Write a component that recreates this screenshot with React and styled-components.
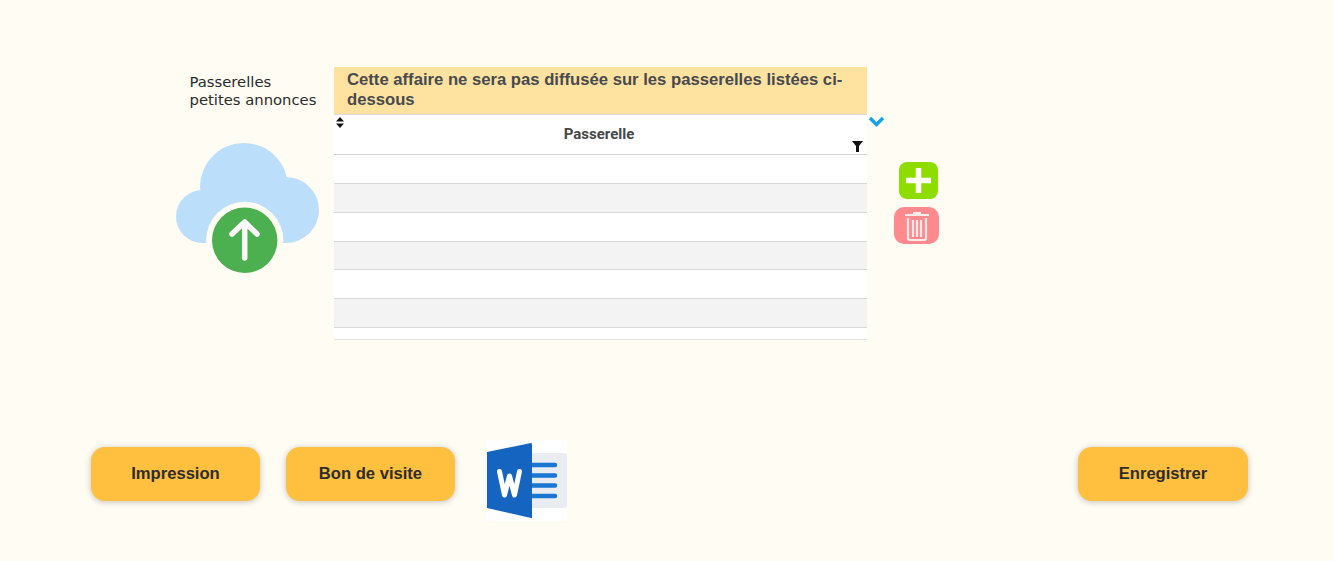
import React from "react";
import styled, { createGlobalStyle } from "styled-components";

const GlobalStyle = createGlobalStyle`
  html, body {
    margin: 0;
    padding: 0;
    background-color: #fffcf4;
    overflow: hidden;
  }
`;

const Page = styled.div`
  display: flex;
  flex-direction: column;
  width: 1334px;
  height: 561px;
  padding-top: 67px;
  box-sizing: border-box;
`;

const TopSection = styled.div`
  display: flex;
  align-items: flex-start;
  height: 373px;
  padding-left: 176px;
`;

const SideColumn = styled.div`
  display: flex;
  flex-direction: column;
  width: 158px;
`;

const SideLabel = styled.div`
  margin-left: 13.5px;
  margin-top: 6px;
  font-family: "DejaVu Sans", sans-serif;
  font-size: 14.8px;
  line-height: 18px;
  color: #2b2b2b;
`;

const CloudIcon = styled.svg`
  display: block;
  width: 143px;
  height: 136px;
  margin-top: 34px;
`;

const TableBox = styled.div`
  display: flex;
  flex-direction: column;
  width: 533px;
`;

const Banner = styled.div`
  box-sizing: border-box;
  height: 48px;
  padding: 3px 13px 0;
  background-color: #fee29f;
  border-bottom: 1px solid #d9d9d9;
  font-family: "Liberation Sans", sans-serif;
  font-size: 16.67px;
  font-weight: bold;
  line-height: 20px;
  color: #474a4f;
`;

const HeaderRow = styled.div`
  position: relative;
  display: flex;
  align-items: center;
  justify-content: center;
  box-sizing: border-box;
  height: 40px;
  padding: 0 3px 1px 0;
  background-color: #ffffff;
  border-bottom: 1px solid #d4d4d4;
  font-family: Roboto, sans-serif;
  font-size: 15px;
  font-weight: bold;
  color: #484848;
`;

const SortIcon = styled.svg`
  position: absolute;
  left: 2px;
  top: 2px;
  width: 8px;
  height: 11px;
`;

const FilterIcon = styled.svg`
  position: absolute;
  right: 4px;
  bottom: 2px;
  width: 11px;
  height: 12px;
`;

const Row = styled.div`
  box-sizing: border-box;
  height: ${(p) => p.$height}px;
  background-color: ${(p) => (p.$odd ? "#f3f3f3" : "#ffffff")};
  border-bottom: 1px solid ${(p) => (p.$last ? "#e2e2e2" : "#d8d8d8")};
`;

const ActionColumn = styled.div`
  display: flex;
  flex-direction: column;
  width: 72px;
  padding-top: 49px;
`;

const Chevron = styled.svg`
  display: block;
  width: 17px;
  height: 11px;
  margin-left: 1px;
`;

const AddButton = styled.div`
  display: flex;
  align-items: center;
  justify-content: center;
  width: 39px;
  height: 37px;
  margin: 35px 0 0 32px;
  border-radius: 8px;
  background-color: #8fdc00;
`;

const DeleteButton = styled.div`
  display: flex;
  align-items: center;
  justify-content: center;
  width: 45px;
  height: 37px;
  margin: 8px 0 0 27px;
  border-radius: 10px;
  background-color: #ff8a8e;
`;

const Footer = styled.div`
  display: flex;
  align-items: flex-start;
  height: 81px;
  padding: 0 86px 0 90.7px;
`;

const OrangeButton = styled.button`
  width: ${(p) => (p.$right ? "170px" : "169.6px")};
  height: 54px;
  margin-top: 7px;
  margin-right: ${(p) => p.$gap || 0}px;
  margin-left: ${(p) => (p.$right ? "auto" : "0")};
  padding: 0 0 1px;
  border: none;
  border-radius: 14px;
  background-color: #ffbf3f;
  box-shadow: 0 1px 6px rgba(0, 0, 0, 0.24);
  font-family: "Liberation Sans", sans-serif;
  font-size: 16.6px;
  font-weight: bold;
  color: #2d2d2d;
`;

const WordLogo = styled.svg`
  display: block;
  width: 80px;
  height: 81px;
  margin-left: 6px;
`;

const rows = [
  { height: 29 },
  { height: 29, odd: true },
  { height: 29 },
  { height: 28, odd: true },
  { height: 29 },
  { height: 29, odd: true },
  { height: 12, last: true },
];

const App = () => {
  return (
    <Page>
      <GlobalStyle />
      <TopSection>
        <SideColumn>
          <SideLabel>
            Passerelles
            <br />
            petites annonces
          </SideLabel>
          <CloudIcon viewBox="0 0 143 136">
            <circle cx="68" cy="44" r="44" fill="#bbdefb" />
            <circle cx="110" cy="67" r="33" fill="#bbdefb" />
            <circle cx="26.5" cy="73.5" r="26.5" fill="#bbdefb" />
            <rect x="26" y="44" width="84" height="56" fill="#bbdefb" />
            <circle cx="68.7" cy="97.3" r="38.6" fill="#fffcf4" />
            <circle cx="68.7" cy="97.3" r="32.7" fill="#4caf50" />
            <path
              d="M68.7 115 V80 M56 91 L68.7 79 L81 91"
              fill="none"
              stroke="#fafafa"
              strokeWidth="5.5"
              strokeLinecap="round"
              strokeLinejoin="round"
            />
          </CloudIcon>
        </SideColumn>
        <TableBox>
          <Banner>Cette affaire ne sera pas diffusée sur les passerelles listées ci-dessous</Banner>
          <HeaderRow>
            <SortIcon viewBox="0 0 8 11">
              <path d="M4 0 L8 4.5 H0 Z M4 11 L0 6.5 H8 Z" fill="#111111" />
            </SortIcon>
            Passerelle
            <FilterIcon viewBox="0 0 11 12">
              <path d="M0 1 H11 L7 6 V12 H4 V6 Z" fill="#111111" />
            </FilterIcon>
          </HeaderRow>
          {rows.map((r, i) => (
            <Row key={i} $height={r.height} $odd={r.odd} $last={r.last} />
          ))}
        </TableBox>
        <ActionColumn>
          <Chevron viewBox="0 0 17 11">
            <path d="M2 2 L8.5 8.5 L15 2" fill="none" stroke="#14a3e8" strokeWidth="3.4" />
          </Chevron>
          <AddButton>
            <svg width="27" height="27" viewBox="0 0 27 27">
              <path d="M13.5 1 V26 M1 13.5 H26" stroke="#ffffff" strokeWidth="5.5" fill="none" />
            </svg>
          </AddButton>
          <DeleteButton>
            <svg width="24" height="30" viewBox="0 0 24 30" fill="none" stroke="#ffeaea" strokeWidth="2.2">
              <path d="M0 4 H24 M8 2 H16" />
              <path d="M3 7 V27 Q3 29 5 29 H19 Q21 29 21 27 V7" />
              <path d="M8 9 V26 M12 9 V26 M16 9 V26" />
            </svg>
          </DeleteButton>
        </ActionColumn>
      </TopSection>
      <Footer>
        <OrangeButton $gap={25.4}>Impression</OrangeButton>
        <OrangeButton $gap={25.7}>Bon de visite</OrangeButton>
        <WordLogo viewBox="0 0 80 81">
          <rect width="80" height="81" fill="#ffffff" />
          <rect x="40" y="13" width="40" height="55" rx="2" fill="#e9edf2" />
          <path
            d="M45 25 H68 M45 35.5 H68 M45 45.5 H68 M45 56 H68"
            stroke="#1976d2"
            strokeWidth="4.5"
            strokeLinecap="round"
          />
          <path d="M0 12 L44 3 Q45 3 45 5 V77 Q45 79 44 78 L0 68 Z" fill="#1565c0" />
          <path
            d="M12.5 31.5 L17.5 55 L22.5 36 L27.5 55 L32.5 31.5"
            fill="none"
            stroke="#ffffff"
            strokeWidth="5"
            strokeLinejoin="round"
            strokeLinecap="round"
          />
        </WordLogo>
        <OrangeButton $right>Enregistrer</OrangeButton>
      </Footer>
    </Page>
  );
};

export default App;
